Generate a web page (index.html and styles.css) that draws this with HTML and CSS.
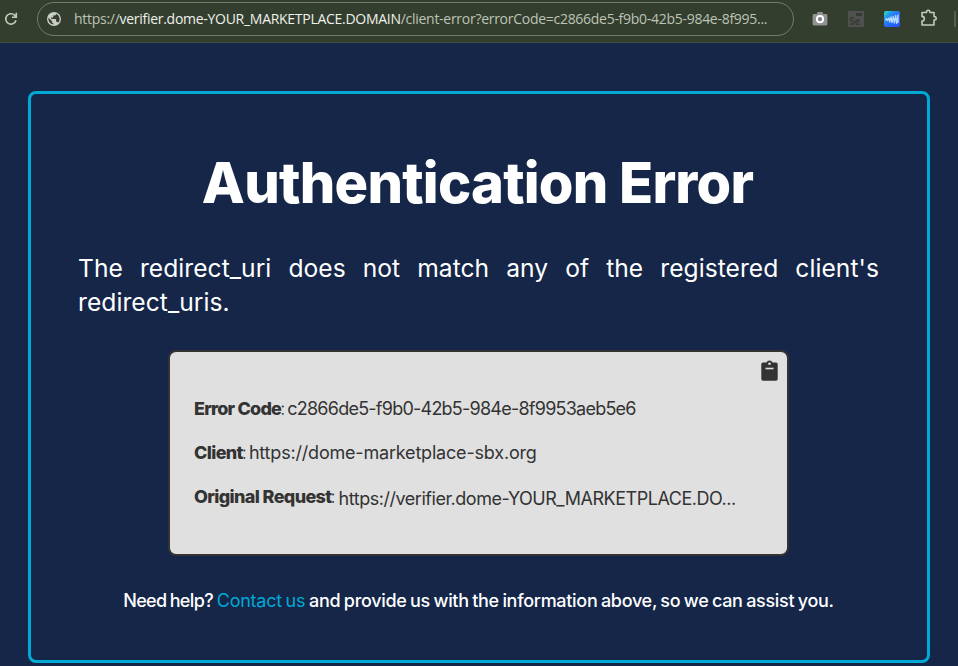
FILE: index.html
```html
<!DOCTYPE html>
<html lang="en">
<head>
<meta charset="utf-8">
<title>Authentication Error</title>
<link rel="stylesheet" href="styles.css">
</head>
<body>
<header class="toolbar">
  <svg class="reload" viewBox="0 0 14 14" width="14" height="14"><path d="M12 8.2A5.2 5.2 0 1 1 10.8 3.4L12.3 5M12.3 .8V5.2H8" fill="none" stroke="#c0ceb5" stroke-width="1.6"/></svg>
  <div class="address">
    <svg class="globe" viewBox="2 2 20 20" width="14" height="14"><path fill="#c9cdc5" d="M12 2a10 10 0 1 0 0 20 10 10 0 0 0 0-20zm-1 17.93A8 8 0 0 1 4.21 10.21L9 15v1a2 2 0 0 0 2 2v1.93zm6.9-2.54A2 2 0 0 0 16 16h-1v-3a1 1 0 0 0-1-1H8v-2h2a1 1 0 0 0 1-1V7h2a2 2 0 0 0 2-2v-.41a8 8 0 0 1 2.9 12.8z"/></svg>
    <span class="url">https://<span class="host">verifier.dome-YOUR_MARKETPLACE.DOMAIN</span>/client-error?errorCode=c2866de5-f9b0-42b5-984e-8f995...</span>
  </div>
  <div class="extensions">
    <svg class="camera" viewBox="0 0 16 16" width="16" height="16"><path fill="#929292" d="M5 3V2a1 1 0 0 1 1-1h4a1 1 0 0 1 1 1v1h3a1.400 1.400 0 0 1 1.400 1.400V13a1.400 1.400 0 0 1-1.400 1.400H2A1.400 1.400 0 0 1 .6 13V4.400A1.400 1.400 0 0 1 2 3z"/><circle cx="8" cy="8.200" r="3.100" fill="#808080" stroke="#fff" stroke-width="2"/></svg>
    <div class="selenium"><i class="badge"></i>Se</div>
    <svg class="wave" viewBox="0 0 16 16" width="16" height="16"><defs><linearGradient id="g" x2="1" y2="1"><stop offset="0" stop-color="#2bf0a0"/><stop offset=".25" stop-color="#2698ee"/><stop offset=".6" stop-color="#2468fa"/><stop offset="1" stop-color="#2b50ff"/></linearGradient></defs><rect width="16" height="16" rx="2" fill="url(#g)"/><path d="M1.500 9.500l1-2 1 2L5 7l.7 4L7 6l1 5.700L9.300 5.500l1 6.500L11.700 4.500l.8 8L14 4v8" fill="none" stroke="#b5dcff" stroke-width="1.300" stroke-linejoin="round"/></svg>
    <svg class="puzzle" viewBox="0 0 18 18" width="18" height="18"><path d="M2 3.500H6.500V3a1.700 1.700 0 0 1 3.400 0v.5H14V7.600h.5a1.700 1.700 0 0 1 0 3.400H14v5H2v-4a2.300 2.300 0 0 0 0-4.600z" fill="none" stroke="#c0ceb5" stroke-width="1.600" stroke-linejoin="round"/></svg>
  </div>
  <i class="divider"></i>
</header>
<main class="card">
  <h1 class="title">Authentication Error</h1>
  <p class="message"><span class="first">The redirect_uri does not match any of the registered client's</span> <span class="rest">redirect_uris.</span></p>
  <section class="details">
    <svg class="clipboard" viewBox="0 0 17 21" width="17" height="21"><path fill="#333" d="M2 2.500H5.500a3.200 3.200 0 0 1 6 0H15a1.800 1.800 0 0 1 1.700 1.800V19a1.800 1.800 0 0 1-1.700 1.800H2A1.800 1.800 0 0 1 .3 19V4.300A1.800 1.800 0 0 1 2 2.500z"/><circle cx="8.500" cy="3.800" r="1.300" fill="#e0e0e0"/><path d="M4.500 8.500h8" stroke="#e0e0e0" stroke-width="1.600"/></svg>
    <p class="row"><b class="k1">Error Code</b><span class="colon">:</span><span class="v1">c2866de5-f9b0-42b5-984e-8f9953aeb5e6</span></p>
    <p class="row"><b class="k2">Client</b><span class="colon">:</span><span class="v2">https://dome-marketplace-sbx.org</span></p>
    <p class="row"><b class="k3">Original Request</b><span class="colon">:</span><span class="v3">https://verifier.dome-YOUR_MARKETPLACE.DO...</span></p>
  </section>
  <p class="help"><span class="question">Need help?</span> <a class="link">Contact us</a> <span class="advice">and provide us with the information above, so we can assist you.</span></p>
</main>
</body>
</html>
```
FILE: styles.css
```css
* { box-sizing: border-box; }
body { margin: 0; height: 666px; overflow: hidden; background: #152649; color: #fff; font-family: Inter, sans-serif; }
p, h1 { margin: 0; white-space: nowrap; }
svg { display: block; flex: none; }
.toolbar { display: flex; height: 43px; padding: 2px 0 0 4px; background: #343e2e; border-bottom: 1px solid #454c41; }
.reload { margin-top: 10px; }
.address { display: flex; align-items: center; width: 757px; height: 34px; margin-left: 19px; padding-left: 9px; border: 1px solid #747b70; border-radius: 17px; }
.url { margin-left: 13px; font: 14px/20px "Open Sans", sans-serif; letter-spacing: -.28px; color: #bcc4b6; white-space: nowrap; }
.host { color: #eef1ec; }
.extensions { display: flex; margin-left: 18px; padding-top: 9px; }
.selenium { width: 16px; height: 16px; margin-left: 20px; padding: 2px 0 0 1px; background: #505050; color: #343e2e; font: bold 10px/11px "Open Sans", sans-serif; }
.badge { display: block; width: 6px; height: 3px; margin-left: 7px; background: #343e2e; }
.wave { margin-left: 20px; }
.puzzle { margin: -2px 0 0 20px; }
.divider { width: 2px; height: 16px; margin: 9px 0 0 16px; background: #50604a; }
.card { width: 902px; height: 572px; margin: 48px 0 0 28px; padding: 54px 48px 0 47px; border: 3px solid #00aad4; border-radius: 8px; }
.title { height: 70px; margin-right: 2px; text-align: center; font-size: 56px; font-weight: 800; line-height: 70px; letter-spacing: -.78px; }
.message { margin-top: 33px; font-size: 24.6px; line-height: 34px; letter-spacing: .05px; }
.first, .rest { display: block; }
.first { white-space: normal; text-align-last: justify; }
.details { position: relative; width: 621px; height: 206px; margin: 31px 0 0 90px; padding: 35px 24px 0; border: 2px solid #333; border-radius: 8px; background: #e0e0e0; color: #333; }
.clipboard { position: absolute; top: 8px; right: 9px; }
.row { display: flex; height: 44px; font-size: 18px; line-height: 44px; }
.row b { font-weight: 800; }
.row .colon { margin: 0 2px 0 -1px; font-weight: 300; }
.k1 { letter-spacing: -.8px; }
.k2 { letter-spacing: -.65px; }
.k3 { letter-spacing: -.64px; }
.v1 { letter-spacing: -.76px; }
.v2 { letter-spacing: -.19px; }
.v3 { margin-left: 1px; padding-top: 2px; letter-spacing: -.47px; }
.help { margin-top: 33px; text-align: center; font-size: 18px; line-height: 24px; word-spacing: -1px; font-weight: 500; }
.question { letter-spacing: -.65px; }
.link { color: #00aad4; font-weight: 400; letter-spacing: -.26px; }
.advice { letter-spacing: -.3px; }
```
